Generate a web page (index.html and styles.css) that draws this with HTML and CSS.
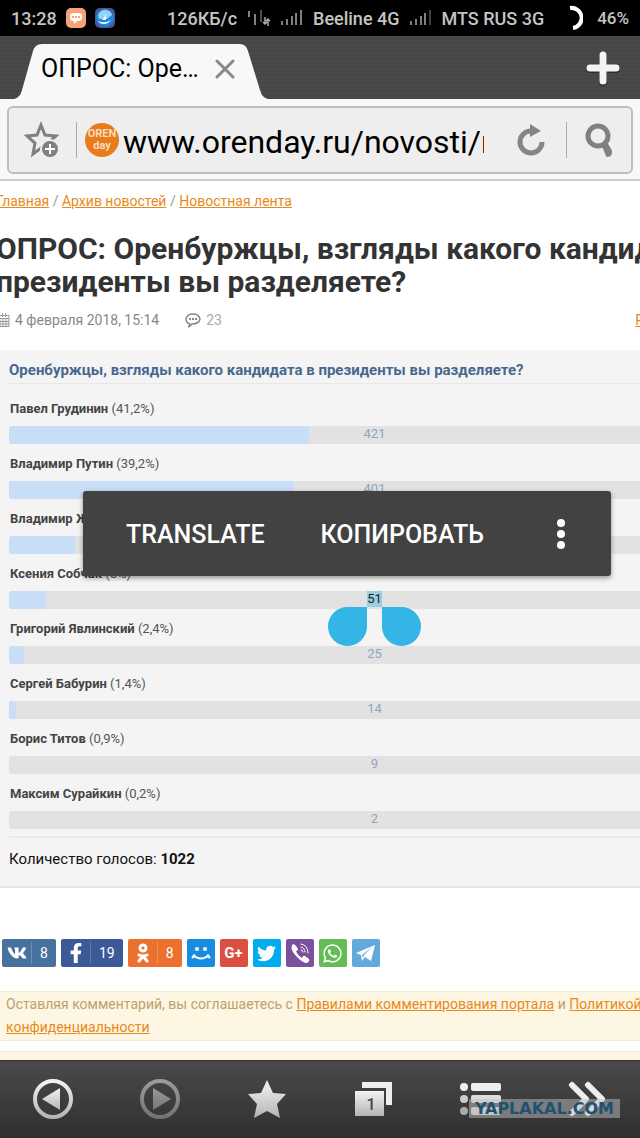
FILE: index.html
```html
<!DOCTYPE html>
<html lang="ru">
<head>
  <meta charset="UTF-8">
  <meta name="viewport" content="width=device-width, initial-scale=1">
  <title>ОПРОС: Оренбуржцы</title>
  <link rel="stylesheet" href="styles.css">
</head>
<body>

  <div class="status">
    <span>13:28</span>
    <svg width="20" height="20" viewBox="0 0 20 20">
      <rect width="20" height="20" rx="5" fill="#f6a274"/>
      <path d="M7 5h6q3 0 3 3v2q0 3-3 3h-2l-3 3v-3H7q-3 0-3-3V8q0-3 3-3z" fill="#fff"/>
      <path d="M6 9h2M9 9h2M12 9h2" stroke="#f6a274" stroke-width="2"/>
    </svg>
    <svg width="20" height="20" viewBox="0 0 20 20">
      <rect width="20" height="20" rx="5" fill="#4c5596"/>
      <circle cx="10" cy="10" r="9" fill="#1f86dc"/>
      <path d="M3 7q3-6 9-5 4 1 5 5l-5 4H4z" fill="#8fd2fa"/>
      <path d="M11 3v9H7q4-3 4-9zM3 13q7 3 13-1-3 4-7 4-4 0-6-3z" fill="#fff"/>
    </svg>
    <div class="status-right">
      <span>126КБ/с</span>
      <svg width="24" height="18" viewBox="0 0 24 18" stroke="#aaa" stroke-width="1.5" fill="none">
        <path d="M2 2v6M8 5v11"/><path d="M14 1v12" stroke="#666"/><path d="M18 8v7M21 10v7M16 13l2 2 2-2M19 12l2-2 2 2"/>
      </svg>
      <svg width="22" height="18" viewBox="0 0 22 18" stroke="#aaa" stroke-width="1.5">
        <path d="M1 12v4M6 10v6M11 7v9M15 4v12M20 1v15"/>
      </svg>
      <span>Beeline 4G</span>
      <svg width="22" height="18" viewBox="0 0 22 18" stroke="#aaa" stroke-width="1.5">
        <path d="M1 12v4M6 10v6M11 7v9M15 4v12"/><path d="M20 1v15" stroke="#555"/>
      </svg>
      <span>MTS RUS 3G</span>
      <svg class="ring" width="14" height="26" viewBox="0 0 14 26">
        <path d="M1 3a10 10 0 0 1 3 20" fill="none" stroke="#fff" stroke-width="4"/>
      </svg>
      <span class="battery">46%</span>
    </div>
  </div>

  <div class="tabs">
    <div class="tab">
      <svg class="tab-shape" viewBox="0 0 254 55" preserveAspectRatio="none">
        <path d="M0 55Q6 54 8 46L19 7Q21 0 28 0H226Q232 0 234 7L246 46Q248 54 254 55z" fill="#f8f8f8"/>
      </svg>
      <span>ОПРОС: Оре…</span>
      <button class="icon-btn" aria-label="Закрыть вкладку">
        <svg width="20" height="20" viewBox="0 0 20 20"><path d="M2 2l16 16M18 2L2 18" stroke="#888" stroke-width="3" stroke-linecap="round"/></svg>
      </button>
    </div>
    <button class="icon-btn new-tab" aria-label="Новая вкладка">
      <svg width="34" height="36" viewBox="0 0 34 36">
        <path d="M17 6v26M4 19h26" stroke="#2c2c2c" stroke-width="8" stroke-linecap="round"/>
        <path d="M17 5v26M4 18h26" stroke="#f4f4f4" stroke-width="7" stroke-linecap="round"/>
      </svg>
    </button>
  </div>

  <div class="address">
    <div class="address-box">
      <button class="icon-btn" aria-label="В закладки">
        <svg width="36" height="38" viewBox="0 0 36 38">
          <path d="M17 4l4 10 11 1-8 7 2 11-9-6-8 6 2-11-8-7 10-1z" fill="none" stroke="#808080" stroke-width="3"/>
          <circle cx="26" cy="28" r="9" fill="#808080" stroke="#eee" stroke-width="2"/>
          <path d="M26 23v10M21 28h10" stroke="#fff" stroke-width="2"/>
        </svg>
      </button>
      <span class="divider"></span>
      <div class="favicon"><span>OREN</span><span>day</span></div>
      <input class="url" type="text" aria-label="Адрес" value="www.orenday.ru/novosti/n">
      <button class="icon-btn" aria-label="Обновить">
        <svg width="30" height="34" viewBox="0 0 30 34">
          <path d="M15 8a11 11 0 1 0 11 11" fill="none" stroke="#858585" stroke-width="5"/>
          <path d="M14 1l11 7-11 6z" fill="#858585"/>
        </svg>
      </button>
      <span class="divider divider-right"></span>
      <button class="icon-btn" aria-label="Поиск">
        <svg width="30" height="36" viewBox="0 0 30 36">
          <circle cx="14" cy="14" r="10" fill="none" stroke="#808080" stroke-width="5"/>
          <path d="M19 24l4-2 4 7q1 5-4 5z" fill="#808080" stroke="#808080" stroke-width="2" stroke-linejoin="round"/>
        </svg>
      </button>
    </div>
  </div>

  <div class="viewport">
    <div class="site">
      <nav class="crumbs"><a href="#">Главная</a> / <a href="#">Архив новостей</a> / <a href="#">Новостная лента</a></nav>
      <h1>ОПРОС: Оренбуржцы, взгляды какого кандидата в<br>президенты вы разделяете?</h1>
      <div class="meta">
        <svg width="14" height="14" viewBox="0 0 14 14" fill="none" stroke="#999">
          <path d="M1 2.5h12v11H1zM1 5.5h12M1 8.5h12M1 11h12M4 5v8M7 5v8M10 5v8M3.5 0v4M6.5 0v4M9.5 0v4"/>
        </svg>
        <span>4 февраля 2018, 15:14</span>
        <svg class="bubble" width="16" height="15" viewBox="0 0 16 15">
          <path d="M3 14q2-1 2-3-4-1-4-5 1-5 7-5t7 5q-1 5-8 5-1 2-4 3z" fill="none" stroke="#888" stroke-width="1.5"/>
          <path d="M4 6h2M7 6h2M10 6h2" stroke="#888" stroke-width="2"/>
        </svg>
        <span class="light">23</span>
        <a class="print" href="#">Распечатать</a>
      </div>

      <section class="poll">
        <h2>Оренбуржцы, взгляды какого кандидата в президенты вы разделяете?</h2>
        <ul>
          <li><p><b>Павел Грудинин</b> (41,2%)</p><div class="bar"><div class="fill" style="width: 41%"></div><span>421</span></div></li>
          <li><p><b>Владимир Путин</b> (39,2%)</p><div class="bar"><div class="fill" style="width: 39%"></div><span>401</span></div></li>
          <li><p><b>Владимир Жириновский</b></p><div class="bar"><div class="fill" style="width: 9%"></div></div></li>
          <li><p><b>Ксения Собчак</b> (5%)</p><div class="bar"><div class="fill" style="width: 5%"></div><span class="selected">51<i class="handle handle-start"></i><i class="handle handle-end"></i></span></div></li>
          <li><p><b>Григорий Явлинский</b> (2,4%)</p><div class="bar"><div class="fill" style="width: 2%"></div><span>25</span></div></li>
          <li><p><b>Сергей Бабурин</b> (1,4%)</p><div class="bar"><div class="fill" style="width: 1%"></div><span>14</span></div></li>
          <li><p><b>Борис Титов</b> (0,9%)</p><div class="bar"><span>9</span></div></li>
          <li><p><b>Максим Сурайкин</b> (0,2%)</p><div class="bar"><span>2</span></div></li>
        </ul>
        <p class="total">Количество голосов: <b>1022</b></p>
      </section>

      <div class="share">
        <a class="vk" href="#" aria-label="ВКонтакте"><svg width="20" height="18" viewBox="0 0 576 512"><path fill="#fff" d="M545 117.7c3.7-12.5 0-21.7-17.8-21.7h-58.9c-15 0-21.9 7.9-25.6 16.7 0 0-30 73.1-72.4 120.5-13.7 13.7-20 18.1-27.5 18.1-3.7 0-9.4-4.4-9.4-16.9V117.7c0-15-4.2-21.7-16.6-21.7h-92.6c-9.4 0-15 7-15 13.5 0 14.2 21.2 17.5 23.4 57.5v86.8c0 19-3.4 22.5-10.9 22.5-20 0-68.6-73.4-97.4-157.4-5.8-16.3-11.5-22.9-26.6-22.9H38.8c-16.8 0-20.2 7.9-20.2 16.7 0 15.6 20 93.1 93.1 195.5C160.4 378.1 229 416 291.4 416c37.5 0 42.1-8.4 42.1-22.9 0-66.8-3.4-73.1 15.4-73.1 8.7 0 23.7 4.4 58.7 38.1 40 40 46.6 57.9 69 57.9h58.9c16.8 0 25.3-8.4 20.4-25-11.2-34.9-86.9-106.7-90.3-111.5-8.7-11.2-6.2-16.2 0-26.2.1-.1 72-101.3 79.4-135.6z"/></svg><span>8</span></a>
        <a class="fb" href="#" aria-label="Facebook"><svg width="20" height="20" viewBox="0 0 320 512"><path fill="#fff" d="M279 288l14-93h-89v-60c0-25 13-50 53-50h40V6s-37-6-72-6c-73 0-121 44-121 125v70H23v93h81v224h100V288z"/></svg><span>19</span></a>
        <a class="ok" href="#" aria-label="Одноклассники"><svg width="20" height="20" viewBox="0 0 20 20" fill="none" stroke="#fff" stroke-linecap="round"><circle cx="10" cy="5" r="3" stroke-width="3"/><path d="M6 12q4 2 8 0M10 13l-4 5M10 13l4 5" stroke-width="3"/></svg><span>8</span></a>
        <a class="mail" href="#" aria-label="Мой Мир"><svg width="20" height="18" viewBox="0 0 20 18"><circle cx="6" cy="5" r="2" fill="#fff"/><circle cx="14" cy="5" r="2" fill="#fff"/><path d="M2 11q8 7 16 0M1 14l3-3M19 14l-3-3" fill="none" stroke="#fff" stroke-width="2"/></svg></a>
        <a class="gplus" href="#" aria-label="Google Plus">G+</a>
        <a class="tw" href="#" aria-label="Twitter"><svg width="19" height="19" viewBox="0 0 24 24"><path fill="#fff" d="M23.95 4.57a10 10 0 01-2.825.775 4.958 4.958 0 002.163-2.723c-.951.555-2.005.959-3.127 1.184a4.92 4.92 0 00-8.384 4.482C7.69 8.095 4.067 6.13 1.64 3.162a4.822 4.822 0 00-.666 2.475c0 1.71.87 3.213 2.188 4.096a4.904 4.904 0 01-2.228-.616v.06a4.923 4.923 0 003.946 4.827 4.996 4.996 0 01-2.212.085 4.936 4.936 0 004.604 3.417 9.867 9.867 0 01-6.102 2.105c-.39 0-.779-.023-1.17-.067a13.995 13.995 0 007.557 2.209c9.053 0 13.998-7.496 13.998-13.985 0-.21 0-.42-.015-.63A9.935 9.935 0 0024 4.59z"/></svg></a>
        <a class="viber" href="#" aria-label="Viber"><svg width="20" height="20" viewBox="0 0 20 20"><path d="M2 2q2-2 4 1l2 3q0 2-2 2 2 5 6 7 1-3 3-2l4 3q1 2-2 4-4 0-10-6Q0 7 2 2z" fill="#fff"/><path d="M11 1q7 1 7 9M11 4q4 1 4 5M11 7q2 0 2 2" fill="none" stroke="#fff" stroke-linecap="round"/></svg></a>
        <a class="wa" href="#" aria-label="WhatsApp"><svg width="19" height="21" viewBox="0 0 448 512"><path fill="#fff" d="M380.9 97.1C339 55.1 283.2 32 223.9 32c-122.4 0-222 99.6-222 222 0 39.1 10.2 77.3 29.6 111L0 480l117.7-30.9c32.4 17.7 68.9 27 106.1 27h.1c122.3 0 224.1-99.6 224.1-222 0-59.3-25.2-115-67.1-157zm-157 341.6c-33.2 0-65.7-8.9-94-25.7l-6.7-4-69.8 18.3L72 359.2l-4.4-7c-18.5-29.4-28.2-63.3-28.2-98.2 0-101.7 82.8-184.5 184.6-184.5 49.3 0 95.6 19.2 130.4 54.1 34.8 34.9 56.2 81.2 56.1 130.5 0 101.8-84.9 184.6-186.6 184.6zm101.2-138.2c-5.5-2.8-32.8-16.2-37.9-18-5.1-1.9-8.8-2.8-12.5 2.8-3.7 5.6-14.3 18-17.6 21.8-3.2 3.7-6.5 4.2-12 1.4-32.6-16.3-54-29.1-75.5-66-5.7-9.8 5.7-9.1 16.3-30.3 1.8-3.7.9-6.9-.5-9.7-1.4-2.8-12.5-30.1-17.1-41.2-4.5-10.8-9.1-9.3-12.5-9.5-3.2-.2-6.9-.2-10.6-.2-3.7 0-9.7 1.4-14.8 6.9-5.1 5.6-19.4 19-19.4 46.3 0 27.3 19.9 53.7 22.6 57.4 2.8 3.7 39.1 59.7 94.8 83.8 35.2 15.2 49 16.5 66.6 13.9 10.7-1.6 32.8-13.4 37.4-26.4 4.6-13 4.6-24.1 3.2-26.4-1.3-2.5-5-3.9-10.5-6.6z"/></svg></a>
        <a class="tg" href="#" aria-label="Telegram"><svg width="20" height="18" viewBox="0 0 20 18"><path d="M0 9L19 1l-4 16-6-4-3 4-1-6zM6 11l1 3 1-3 8-8z" fill="#fff" fill-rule="evenodd"/></svg></a>
      </div>

      <div class="notice">Оставляя комментарий, вы соглашаетесь с <a href="#">Правилами комментирования портала</a> и <a href="#">Политикой<br>конфиденциальности</a></div>
      <div class="notice"></div>
    </div>

    <div class="popup">
      <button>TRANSLATE</button>
      <button>КОПИРОВАТЬ</button>
      <button class="more" aria-label="Ещё">
        <svg width="8" height="30" viewBox="0 0 8 30" fill="#fff"><circle cx="4" cy="4" r="4"/><circle cx="4" cy="15" r="4"/><circle cx="4" cy="26" r="4"/></svg>
      </button>
    </div>
  </div>

  <div class="toolbar">
    <svg class="defs" width="0" height="0">
      <linearGradient id="silver" x1="0" y1="0" x2="0" y2="1"><stop offset="0" stop-color="#f4f4f4"/><stop offset="1" stop-color="#b4b4b4"/></linearGradient>
      <linearGradient id="dim" x1="0" y1="0" x2="0" y2="1"><stop offset="0" stop-color="#9a9a9a"/><stop offset="1" stop-color="#747474"/></linearGradient>
    </svg>
    <button class="icon-btn" aria-label="Назад">
      <svg width="42" height="42" viewBox="0 0 42 42"><circle cx="21" cy="21" r="18" fill="none" stroke="url(#silver)" stroke-width="4"/><path d="M10 21l18-11v22z" fill="url(#silver)"/></svg>
    </button>
    <button class="icon-btn" aria-label="Вперёд">
      <svg width="42" height="42" viewBox="0 0 42 42"><circle cx="21" cy="21" r="18" fill="none" stroke="url(#dim)" stroke-width="4"/><path d="M32 21L14 10v22z" fill="url(#dim)"/></svg>
    </button>
    <button class="icon-btn" aria-label="Закладки">
      <svg width="42" height="42" viewBox="0 0 42 42"><path d="M21 2l6 13 13 1-9 10 3 14-13-7-13 7 3-14L2 16l13-1z" fill="url(#silver)"/></svg>
    </button>
    <button class="icon-btn" aria-label="Вкладки">
      <svg width="38" height="36" viewBox="0 0 38 36">
        <path d="M8 1h30v23h-6V7H8z" fill="#eee"/>
        <rect x="1" y="10" width="29" height="25" fill="url(#silver)"/>
        <text class="tab-count" x="17" y="29" text-anchor="middle">1</text>
      </svg>
    </button>
    <button class="icon-btn" aria-label="Меню">
      <svg width="42" height="34" viewBox="0 0 42 34" fill="#eee">
        <circle cx="5" cy="5" r="4"/><circle cx="5" cy="17" r="4" fill="#ccc"/><circle cx="5" cy="29" r="4" fill="#aaa"/>
        <rect x="12" y="1" width="30" height="8" rx="2"/><rect x="12" y="13" width="30" height="8" rx="2" fill="#ddd"/><rect x="12" y="25" width="30" height="8" rx="2" fill="#ccc"/>
      </svg>
    </button>
    <button class="icon-btn" aria-label="Дальше">
      <svg width="38" height="36" viewBox="0 0 38 36" fill="none" stroke="#eee" stroke-width="6" stroke-linecap="round" stroke-linejoin="round"><path d="M4 4l14 14L4 32M20 4l14 14-14 14"/></svg>
    </button>
    <div class="watermark">YAPLAKAL.COM</div>
  </div>

</body>
</html>
```
FILE: styles.css
```css
* {
  box-sizing: border-box;
}
body {
  margin: 0;
  height: 100vh;
  display: flex;
  flex-direction: column;
  overflow: hidden;
  font-family: Roboto, sans-serif;
  font-size: 14px;
  background: #fff;
}
svg {
  display: block;
  flex-shrink: 0;
}
button {
  font: inherit;
  padding: 0;
  border: none;
  background: none;
  cursor: pointer;
}
.icon-btn {
  display: flex;
  align-items: center;
  justify-content: center;
}

/* phone status bar */
.status {
  display: flex;
  align-items: center;
  gap: 9px;
  height: 36px;
  padding: 0 11px;
  flex-shrink: 0;
  background: #000;
  color: #c4c4c4;
  font-size: 18px;
  font-weight: 500;
  white-space: nowrap;
}
.status-right {
  display: flex;
  align-items: center;
  gap: 10px;
  margin-left: auto;
}
.ring {
  margin-left: 15px;
}
.battery {
  margin-left: 4px;
  font-size: 17px;
}

/* tab strip */
.tabs {
  display: flex;
  align-items: flex-end;
  justify-content: space-between;
  height: 63px;
  padding: 0 20px 0 14px;
  flex-shrink: 0;
  background: repeating-linear-gradient(#494949 0 2px, #464646 2px 4px);
}
.tab {
  position: relative;
  display: flex;
  align-items: center;
  justify-content: space-between;
  width: 254px;
  height: 55px;
  padding: 0 33px 6px 27px;
  font-size: 25px;
}
.tab > span,
.tab .icon-btn {
  position: relative;
}
.tab-shape {
  position: absolute;
  left: 0;
  top: 0;
  width: 100%;
  height: 100%;
}
.new-tab {
  height: 63px;
}

/* address bar */
.address {
  height: 82px;
  padding: 7px;
  flex-shrink: 0;
  background: #f8f8f8;
  border-bottom: 2px solid #ccc;
}
.address-box {
  display: flex;
  align-items: center;
  height: 68px;
  padding: 0 17px 0 15px;
  background: #eee;
  border: 2px solid #bdbdbd;
  border-radius: 6px;
}
.divider {
  width: 1px;
  height: 36px;
  margin: 0 8px 0 16px;
  background: #aaa;
}
.divider-right {
  margin: 0 17px 0 20px;
}
.favicon {
  display: flex;
  flex-direction: column;
  align-items: center;
  justify-content: center;
  width: 34px;
  height: 34px;
  flex-shrink: 0;
  border-radius: 50%;
  background: #e87b1c;
  color: #fbdcc0;
  font-size: 11px;
  font-weight: 700;
  line-height: 12px;
}
.url {
  flex: 1;
  min-width: 0;
  margin: 0 32px 0 4px;
  padding: 3px 0 0;
  border: none;
  outline: none;
  background: none;
  font: 32px Roboto, sans-serif;
  color: #000;
}

/* web page, wider than the window */
.viewport {
  position: relative;
  flex: 1;
  min-height: 0;
  overflow: hidden;
}
.site {
  width: calc(100% + 116px);
  margin-left: -4px;
}
.site a {
  color: #e8891d;
}
.crumbs {
  padding-top: 10px;
  line-height: 20px;
  color: #999;
}
h1 {
  margin: 21px 0 0;
  font-size: 30px;
  line-height: 33px;
  color: #333;
  white-space: nowrap;
}
.meta {
  display: flex;
  align-items: center;
  gap: 5px;
  margin-top: 12px;
  line-height: 20px;
  color: #888;
}
.bubble {
  margin-left: 21px;
}
.light {
  color: #aaa;
}
.meta .print {
  margin-left: auto;
  margin-right: 34px;
}

.poll {
  margin-top: 20px;
  padding: 10px 12px 17px 13px;
  background: #f4f4f4;
  border-bottom: 2px solid #e6e6e6;
}
.poll h2 {
  margin: 0 0 15px;
  padding-bottom: 3px;
  border-bottom: 1px solid #e8e8e8;
  color: #47688e;
  font-size: 15px;
  line-height: 20px;
}
.poll ul {
  display: grid;
  gap: 10px;
  margin: 0;
  padding: 0 0 7px;
  list-style: none;
  border-bottom: 2px solid #eaeaea;
}
.poll p {
  margin: 0;
}
.poll li p {
  padding: 0 1px 7px;
  font-size: 13px;
  line-height: 20px;
  color: #555;
}
.poll li b {
  color: #444;
}
.bar {
  position: relative;
  display: flex;
  justify-content: center;
  height: 18px;
  border-radius: 3px;
  background: #e2e2e2;
  color: #93a3bc;
  font-size: 13px;
  line-height: 16px;
}
.fill {
  position: absolute;
  left: 0;
  top: 0;
  height: 100%;
  border-radius: 3px;
  background: #c8def7;
}
.bar span {
  position: relative;
}
.bar .selected {
  height: 16px;
  color: #222;
  background: #99cfe3;
}
.handle {
  position: absolute;
  top: 100%;
  width: 39px;
  height: 39px;
  background: #33b5e5;
}
.handle-start {
  right: 100%;
  border-radius: 50% 0 50% 50%;
}
.handle-end {
  left: 100%;
  border-radius: 0 50% 50% 50%;
}
.poll .total {
  margin-top: 11px;
  font-size: 15px;
  line-height: 20px;
  color: #111;
}

.share {
  display: flex;
  gap: 5px;
  margin: 51px 0 24px 6px;
}
.share a {
  display: flex;
  align-items: center;
  justify-content: center;
  min-width: 28px;
  height: 28px;
  border-radius: 2px;
  color: #fff;
  text-decoration: none;
}
.share svg + span {
  margin-left: 4px;
  padding: 0 8px;
  border-left: 1px solid rgba(255, 255, 255, .2);
  line-height: 22px;
}
.share .vk,
.share .fb,
.share .ok {
  padding-left: 5px;
}
.vk { background: #48729e; }
.fb { background: #3c5a98; }
.ok { background: #eb722e; }
.mail { background: #168de2; }
.share .gplus {
  background: #db4f43;
  font-size: 15px;
  font-weight: 700;
}
.tw { background: #00aced; }
.viber { background: #7b519d; }
.wa { background: #65bc54; }
.tg { background: #64a9dc; }

.notice {
  min-height: 50px;
  margin-bottom: 10px;
  padding: 1px 9px;
  border: 1px solid #faebcc;
  background: #fcf6e2;
  color: #c0a16b;
  line-height: 23px;
}

/* text selection menu */
.popup {
  position: absolute;
  left: 83px;
  right: 29px;
  top: 310px;
  display: flex;
  align-items: center;
  gap: 56px;
  height: 85px;
  padding: 1px 46px 0 43px;
  border-radius: 3px;
  background: #424242;
  box-shadow: 0 2px 5px rgba(0, 0, 0, .4);
  color: #fff;
  font-size: 25px;
  font-weight: 500;
}
.popup button {
  color: #fff;
}
.popup .more {
  margin-left: auto;
}

/* bottom toolbar */
.toolbar {
  position: relative;
  display: flex;
  height: 78px;
  padding-bottom: 2px;
  flex-shrink: 0;
  background: linear-gradient(#4a4a4a, #303030);
  border-top: 1px solid #333;
}
.toolbar .icon-btn {
  flex: 1;
}
.defs {
  position: absolute;
}
.tab-count {
  font-size: 16px;
  font-weight: 500;
  fill: #444;
}
.watermark {
  position: absolute;
  right: 20px;
  bottom: 20px;
  padding: 0 6px;
  background: rgba(190, 190, 190, .5);
  color: #1f5272;
  font: bold 16px/19px "DejaVu Sans", sans-serif;
}
```
